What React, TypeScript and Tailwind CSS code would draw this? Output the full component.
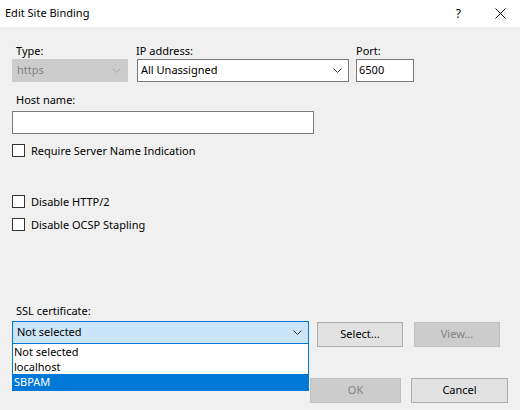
const font = { fontFamily: '"Noto Sans", "Segoe UI", Arial, sans-serif' }

function Chevron({ className }: { className?: string }) {
  return (
    <svg width="9" height="5" viewBox="0 0 9 5" className={className}>
      <path d="M0.5 0.5 L4.5 4.5 L8.5 0.5" fill="none" stroke="currentColor" strokeWidth="1" />
    </svg>
  )
}

function Checkbox({ label }: { label: string }) {
  return (
    <div className="flex items-center gap-[6px] h-[13px]">
      <div className="w-[13px] h-[13px] border border-[#333333] bg-white shrink-0" />
      <span className="text-[11px] leading-[15px] text-black">{label}</span>
    </div>
  )
}

function Button({ label, disabled, w }: { label: string; disabled?: boolean; w: string }) {
  return (
    <div
      className={
        'h-[25px] flex items-center justify-center text-[11px] border ' +
        w +
        (disabled ? ' bg-[#cccccc] border-[#bfbfbf] text-[#838383]' : ' bg-[#e1e1e1] border-[#adadad] text-black')
      }
    >
      {label}
    </div>
  )
}

export default function App() {
  return (
    <div className="w-[520px] h-[410px] bg-[#f0f0f0] flex flex-col overflow-hidden select-none text-black" style={font}>
      {/* title bar */}
      <div className="h-[27px] bg-white flex items-center shrink-0">
        <span className="pl-[5px] text-[11px]">Edit Site Binding</span>
        <span className="ml-auto mr-[34px] text-[12px]">?</span>
        <svg width="11" height="11" viewBox="0 0 11 11" className="mr-[14px]">
          <path d="M0.5 0.5 L10.5 10.5 M10.5 0.5 L0.5 10.5" stroke="currentColor" strokeWidth="1" />
        </svg>
      </div>

      <div className="pl-[12px] flex flex-col">
        {/* type / ip / port */}
        <div className="flex mt-[16px]">
          <div className="w-[116px] flex flex-col">
            <span className="pl-[4px] text-[11px] leading-[15px]">Type:</span>
            <div className="mt-[1px] h-[23px] bg-[#cccccc] border border-[#cccccc] flex items-center pl-[4px] pr-[6px] text-[11px] text-[#838383]">
              https
              <Chevron className="ml-auto text-[#a8a8a8]" />
            </div>
          </div>
          <div className="w-[212px] ml-[9px] flex flex-col">
            <span className="text-[11px] leading-[15px] -ml-[1px]">IP address:</span>
            <div className="mt-[1px] h-[23px] bg-white border border-[#7a7a7a] flex items-center pl-[3px] pr-[6px] text-[11px]">
              All Unassigned
              <Chevron className="ml-auto text-[#333333]" />
            </div>
          </div>
          <div className="w-[58px] ml-[7px] flex flex-col">
            <span className="text-[11px] leading-[15px]">Port:</span>
            <div className="mt-[1px] h-[23px] bg-white border border-[#7a7a7a] flex items-center pl-[2px] text-[11px]">
              6500
            </div>
          </div>
        </div>

        {/* host name */}
        <span className="mt-[10px] pl-[4px] text-[11px] leading-[15px]">Host name:</span>
        <div className="mt-[4px] w-[302px] h-[23px] bg-white border border-[#7a7a7a]" />

        <div className="mt-[10px]">
          <Checkbox label="Require Server Name Indication" />
        </div>
        <div className="mt-[38px]">
          <Checkbox label="Disable HTTP/2" />
        </div>
        <div className="mt-[10px]">
          <Checkbox label="Disable OCSP Stapling" />
        </div>

        {/* SSL certificate */}
        <span className="mt-[72px] pl-[4px] text-[11px] leading-[15px]">SSL certificate:</span>
        <div className="flex mt-[3px]">
          <div className="relative w-[297px]">
            <div className="h-[23px] bg-[#cce4f7] border border-[#0078d7] flex items-center pl-[4px] pr-[6px] text-[11px]">
              Not selected
              <Chevron className="ml-auto text-[#333333]" />
            </div>
            <div className="absolute left-0 top-[23px] w-[297px] bg-white border border-t-0 border-[#0078d7] flex flex-col text-[11px] leading-[15px] z-10">
              <span className="pl-[1px] h-[15px]">Not selected</span>
              <span className="pl-[1px] h-[15px]">localhost</span>
              <span className="pl-[1px] h-[16px] bg-[#0078d7] text-white">SBPAM</span>
            </div>
          </div>
          <div className="ml-[8px] mt-[1px] flex gap-[11px]">
            <Button label="Select..." w="w-[86px]" />
            <Button label="View..." w="w-[86px]" disabled />
          </div>
        </div>

        <div className="flex mt-[31px] ml-[298px] gap-[10px]">
          <Button label="OK" w="w-[91px]" disabled />
          <Button label="Cancel" w="w-[97px]" />
        </div>
      </div>
    </div>
  )
}
